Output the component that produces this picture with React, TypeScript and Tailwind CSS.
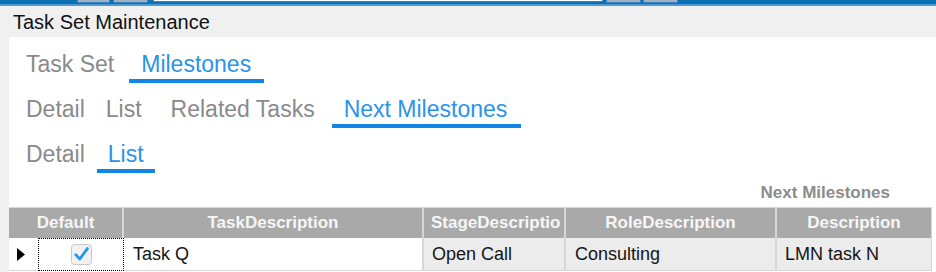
import React from "react";

function TabRow({ tabs }: { tabs: { label: string; ml: string; pad?: string; active?: boolean }[] }) {
  return (
    <div className="flex items-start">
      {tabs.map((t) => (
        <div key={t.label} className={`flex flex-col ${t.ml}`}>
          <span
            className={`leading-[26px] text-[23px] whitespace-nowrap ${t.pad ?? ""} ${
              t.active ? "text-[#2a93ea]" : "text-[#8a8a8a]"
            }`}
          >
            {t.label}
          </span>
          <div className={`mt-[2px] h-[4px] ${t.active ? "bg-[#1187e5]" : "bg-transparent"}`} />
        </div>
      ))}
    </div>
  );
}

function CheckBox() {
  return (
    <svg width="21" height="21" viewBox="0 0 21 21">
      <rect x="0.5" y="0.5" width="20" height="20" rx="3" fill="#f1f1f1" stroke="#c8c8c8" />
      <path d="M4.8 10.8 L8.8 15 L16.4 4.6" fill="none" stroke="#2196f3" strokeWidth="2.8" strokeLinecap="round" strokeLinejoin="round" />
    </svg>
  );
}

export default function App() {
  return (
    <div className="w-[936px] h-[272px] overflow-hidden bg-white font-['Liberation_Sans',Arial,sans-serif]">
      {/* top strip */}
      <div className="h-[6px] bg-[#0b6fb3] border-b-2 border-[#4e9ad2] flex items-start">
        <div className="w-[77px]" />
        <div className="w-[33px] h-[3px] bg-[#9fb2c3] border-x border-b border-[#3d84bd]" />
        <div className="w-[3px]" />
        <div className="w-[35px] h-[3px] bg-[#9fb2c3] border-x border-b border-[#3d84bd]" />
        <div className="w-[5px]" />
        <div className="w-[450px] h-[2px] bg-white border-x border-b border-[#3d84bd]" />
        <div className="w-[3px]" />
        <div className="w-[35px] h-[3px] bg-[#9fb2c3] border-x border-b border-[#3d84bd]" />
        <div className="w-[2px]" />
        <div className="w-[35px] h-[3px] bg-[#9fb2c3] border-x border-b border-[#3d84bd]" />
      </div>
      {/* title */}
      <div className="h-[31px] bg-[#f0f0f0] pl-[13px] flex items-center">
        <span className="text-[20px] leading-[24px] text-[#111]">Task Set Maintenance</span>
      </div>
      {/* content */}
      <div className="flex h-[235px]">
        <div className="w-[9px] bg-[#f0f0f0]" />
        <div className="flex-1 flex flex-col">
          <div className="pt-[14px] flex flex-col gap-[13px]">
            <TabRow
              tabs={[
                { label: "Task Set", ml: "ml-[17px]" },
                { label: "Milestones", ml: "ml-[15px]", pad: "pl-[12px] pr-[13px]", active: true },
              ]}
            />
            <TabRow
              tabs={[
                { label: "Detail", ml: "ml-[17px]" },
                { label: "List", ml: "ml-[21px]" },
                { label: "Related Tasks", ml: "ml-[29px]" },
                { label: "Next Milestones", ml: "ml-[17px]", pad: "pl-[12px] pr-[14px]", active: true },
              ]}
            />
            <TabRow
              tabs={[
                { label: "Detail", ml: "ml-[17px]" },
                { label: "List", ml: "ml-[12px]", pad: "pl-[11px] pr-[11px]", active: true },
              ]}
            />
          </div>
          <div className="mt-[10px] h-[20px] flex justify-end pr-[46px]">
            <span className="text-[17px] leading-[20px] font-bold text-[#8c8c8c]">Next Milestones</span>
          </div>
          {/* table */}
          <div className="mt-[4px] grid grid-cols-[29px_86px_300px_142px_211px_155px] border-t border-[#d6d6d6] w-[923px]">
            <div className="col-span-2 h-[30px] bg-[#a9a9a9] border-r-2 border-[#d6d6d6] flex items-center justify-center text-[17px] font-bold text-[#f6f6f6]">
              Default
            </div>
            <div className="h-[30px] bg-[#a9a9a9] border-r-2 border-[#d6d6d6] flex items-center justify-center text-[17px] font-bold text-[#f6f6f6]">
              TaskDescription
            </div>
            <div className="h-[30px] bg-[#a9a9a9] border-r-2 border-[#d6d6d6] flex items-center pl-[7px] overflow-hidden whitespace-nowrap text-[17px] font-bold text-[#f6f6f6]">
              StageDescriptio
            </div>
            <div className="h-[30px] bg-[#a9a9a9] border-r-2 border-[#d6d6d6] flex items-center justify-center text-[17px] font-bold text-[#f6f6f6]">
              RoleDescription
            </div>
            <div className="h-[30px] bg-[#a9a9a9] border-r border-[#d6d6d6] flex items-center justify-center text-[17px] font-bold text-[#f6f6f6]">
              Description
            </div>

            <div className="h-[33px] bg-white flex items-center pl-[8px] border-b border-[#d6d6d6]">
              <svg width="8" height="13" viewBox="0 0 8 13">
                <polygon points="0,0 8,6.5 0,13" fill="#000" />
              </svg>
            </div>
            <div className="h-[33px] bg-white border border-dotted border-black flex items-center justify-center">
              <CheckBox />
            </div>
            <div className="h-[33px] bg-white border-r-2 border-b border-[#d6d6d6] flex items-center pl-[9px] text-[18px] text-[#151515]">
              Task Q
            </div>
            <div className="h-[33px] bg-[#ececec] border-r-2 border-b border-[#d6d6d6] flex items-center pl-[8px] text-[18px] text-[#151515]">
              Open Call
            </div>
            <div className="h-[33px] bg-[#ececec] border-r-2 border-b border-[#d6d6d6] flex items-center pl-[9px] text-[18px] text-[#151515]">
              Consulting
            </div>
            <div className="h-[33px] bg-[#ececec] border-r border-b border-[#d6d6d6] flex items-center pl-[8px] text-[18px] text-[#151515]">
              LMN task N
            </div>
          </div>
        </div>
      </div>
    </div>
  );
}
